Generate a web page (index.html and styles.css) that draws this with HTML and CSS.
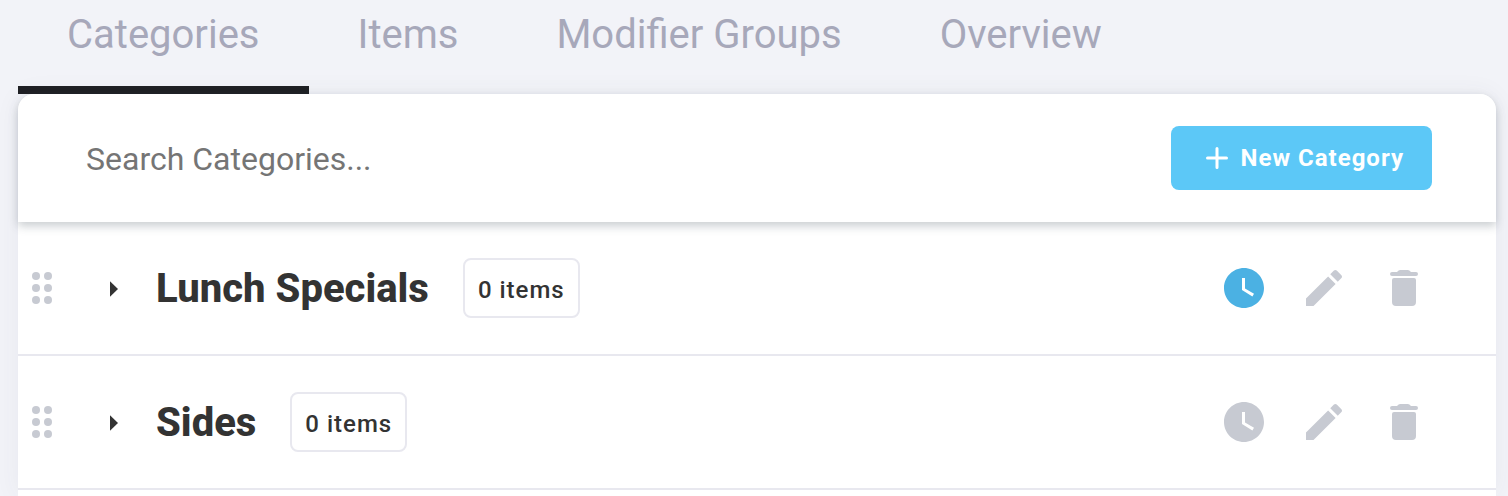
FILE: index.html
```html
<!DOCTYPE html>
<html lang="en">
<head>
    <meta charset="UTF-8">
    <meta name="viewport" content="width=device-width, initial-scale=1.0">
    <title>Menu Categories</title>
    <link rel="stylesheet" href="styles.css">
</head>
<body>
    <!-- Shared icons -->
    <svg class="sprite" aria-hidden="true">
        <symbol id="icon-drag" viewBox="0 0 24 24">
            <circle cx="9" cy="6" r="2"/><circle cx="15" cy="6" r="2"/>
            <circle cx="9" cy="12" r="2"/><circle cx="15" cy="12" r="2"/>
            <circle cx="9" cy="18" r="2"/><circle cx="15" cy="18" r="2"/>
        </symbol>
        <symbol id="icon-arrow" viewBox="0 0 24 24">
            <path d="M10 8.6v7.8l4-3.9z"/>
        </symbol>
        <symbol id="icon-clock" viewBox="0 0 24 24">
            <path d="M12 2C6.5 2 2 6.5 2 12s4.5 10 10 10 10-4.5 10-10S17.5 2 12 2zm4.2 14.2L11 13V7h1.5v5.2l4.5 2.7-.8 1.3z"/>
        </symbol>
        <symbol id="icon-edit" viewBox="0 0 24 24">
            <path d="M3 17.25V21h3.75L17.81 9.94l-3.75-3.75L3 17.25zM20.71 7.04c.39-.39.39-1.02 0-1.41l-2.34-2.34a1 1 0 0 0-1.41 0l-1.83 1.83 3.75 3.75 1.83-1.83z"/>
        </symbol>
        <symbol id="icon-delete" viewBox="0 0 24 24">
            <path d="M6 8a1 1 0 0 1 1-1h10a1 1 0 0 1 1 1v11a2 2 0 0 1-2 2H8a2 2 0 0 1-2-2zM6 4h2.5l.8-.7q.3-.3.8-.3h3.8q.5 0 .8.3l.8.7H18a1 1 0 0 1 0 2H6a1 1 0 0 1 0-2z"/>
        </symbol>
        <symbol id="icon-plus" viewBox="0 0 24 24">
            <path d="M12 2.5v19M2.5 12h19" fill="none" stroke="currentColor" stroke-width="3" stroke-linecap="round"/>
        </symbol>
    </svg>

    <nav class="tabs">
        <a class="tab active" href="#categories">Categories</a>
        <a class="tab" href="#items">Items</a>
        <a class="tab" href="#modifiers">Modifier Groups</a>
        <a class="tab" href="#overview">Overview</a>
    </nav>

    <main class="panel" id="categories">
        <div class="toolbar">
            <input class="search" type="text" placeholder="Search Categories..." aria-label="Search Categories">
            <button class="new-category" type="button">
                <svg class="plus"><use href="#icon-plus"/></svg>
                New Category
            </button>
        </div>

        <ul class="category-list">
            <li class="category">
                <button class="icon-button" type="button" aria-label="Reorder"><svg class="icon"><use href="#icon-drag"/></svg></button>
                <button class="icon-button expand" type="button" aria-label="Expand"><svg class="icon"><use href="#icon-arrow"/></svg></button>
                <h2 class="name">Lunch Specials</h2>
                <span class="count">0 items</span>
                <div class="actions">
                    <button class="icon-button scheduled" type="button" aria-label="Schedule"><svg class="icon"><use href="#icon-clock"/></svg></button>
                    <button class="icon-button" type="button" aria-label="Edit"><svg class="icon"><use href="#icon-edit"/></svg></button>
                    <button class="icon-button" type="button" aria-label="Delete"><svg class="icon"><use href="#icon-delete"/></svg></button>
                </div>
            </li>
            <li class="category">
                <button class="icon-button" type="button" aria-label="Reorder"><svg class="icon"><use href="#icon-drag"/></svg></button>
                <button class="icon-button expand" type="button" aria-label="Expand"><svg class="icon"><use href="#icon-arrow"/></svg></button>
                <h2 class="name">Sides</h2>
                <span class="count">0 items</span>
                <div class="actions">
                    <button class="icon-button" type="button" aria-label="Schedule"><svg class="icon"><use href="#icon-clock"/></svg></button>
                    <button class="icon-button" type="button" aria-label="Edit"><svg class="icon"><use href="#icon-edit"/></svg></button>
                    <button class="icon-button" type="button" aria-label="Delete"><svg class="icon"><use href="#icon-delete"/></svg></button>
                </div>
            </li>
        </ul>
    </main>
</body>
</html>
```

FILE: styles.css
```css
* {
    box-sizing: border-box;
}

body {
    display: flex;
    flex-direction: column;
    min-height: 100vh;
    margin: 0;
    padding: 0 12px 0 18px;
    background-color: #f2f3f8;
    color: #333;
    font-family: Roboto, "Liberation Sans", sans-serif;
}

button {
    border: none;
    font-family: inherit;
    cursor: pointer;
}

.sprite {
    display: none;
}

/* Tabs */
.tabs {
    display: flex;
}

.tab {
    padding: 11px 49px 27px;
    border-bottom: 8px solid transparent;
    color: #a7a8ba;
    font-size: 40px;
    line-height: 48px;
    text-decoration: none;
}

.tab.active {
    border-bottom-color: #1f2024;
}

/* Panel */
.panel {
    flex: 1;
    background-color: #fff;
    border-radius: 16px 16px 0 0;
    box-shadow: 0 0 26px rgba(69, 65, 78, 0.06);
}

.toolbar {
    display: flex;
    align-items: center;
    gap: 32px;
    padding: 32px 64px;
    background-color: #fff;
    border-radius: 16px 16px 0 0;
    box-shadow: 0 4px 10px rgba(60, 75, 85, 0.28);
}

.search {
    flex: 1;
    min-width: 0;
    height: 64px;
    padding: 2px 4px 0;
    border: none;
    outline: none;
    background: none;
    color: #333;
    font-family: inherit;
    font-size: 32px;
}

.search::placeholder {
    color: #757575;
}

.new-category {
    display: flex;
    align-items: center;
    gap: 12px;
    height: 64px;
    padding: 0 28px 0 34px;
    border-radius: 8px;
    background-color: #5cc8f7;
    color: #fff;
    font-size: 24px;
    font-weight: 700;
    letter-spacing: 1px;
}

.plus {
    width: 24px;
    height: 24px;
}

/* Category rows */
.category-list {
    margin: 0;
    padding: 0;
    list-style: none;
}

.category {
    display: flex;
    align-items: center;
    padding: 36px 68px 36px 0;
    border-bottom: 2px solid #e8e8ef;
}

.icon-button {
    padding: 0;
    background: none;
    color: #c7cad2;
}

.icon {
    display: block;
    width: 48px;
    height: 48px;
    fill: currentColor;
}

.expand {
    margin: 0 18px 0 24px;
    color: #333;
}

.scheduled {
    color: #4bb1e3;
}

.name {
    margin: 0 34px 0 0;
    padding-top: 2px;
    font-size: 40px;
    font-weight: 800;
    line-height: 58px;
}

.count {
    padding: 4px 13px 0;
    border: 2px solid #e8e8ef;
    border-radius: 8px;
    font-size: 24px;
    font-weight: 500;
    line-height: 52px;
    letter-spacing: 1px;
}

.actions {
    display: flex;
    gap: 32px;
    margin-left: auto;
}
```
